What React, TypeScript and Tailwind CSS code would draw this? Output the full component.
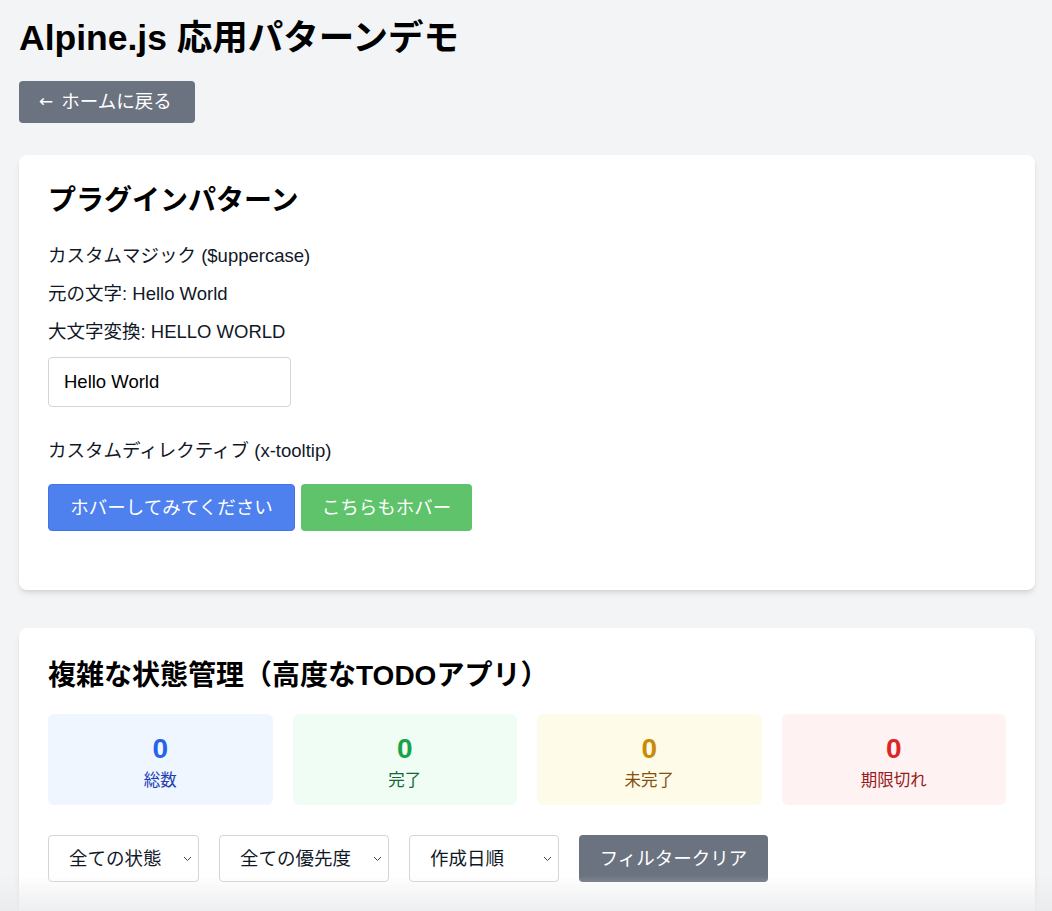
import React, { useState } from "react";

const font = { fontFamily: '"Liberation Sans", "Noto Sans CJK JP", sans-serif' };

const stats = [
  { label: "総数", box: "bg-[#eff6ff]", num: "text-[#2563eb]", text: "text-[#1e40af]" },
  { label: "完了", box: "bg-[#f0fdf4]", num: "text-[#16a34a]", text: "text-[#166534]" },
  { label: "未完了", box: "bg-[#fefce8]", num: "text-[#ca8a04]", text: "text-[#854d0e]" },
  { label: "期限切れ", box: "bg-[#fef2f2]", num: "text-[#dc2626]", text: "text-[#991b1b]" },
];

const Select = ({ label, width }: { label: string; width: string }) => (
  <div
    className={`flex items-center justify-between h-[47px] ${width} pl-[20px] pr-[6px] bg-white border border-gray-300 rounded-[4px] text-[18.5px] text-gray-900`}
  >
    <span>{label}</span>
    <svg width="9" height="6" viewBox="0 0 9 6" fill="none" stroke="#444" strokeWidth="1">
      <path d="M1 1l3.5 3.5L8 1" />
    </svg>
  </div>
);

export default function App() {
  const [text, setText] = useState("Hello World");
  return (
    <div className="min-h-screen bg-[#f3f4f6] text-[#111827]" style={font}>
      <div className="pl-[19px] pr-[17px] pt-[17px] pb-10">
        <h1 className="text-[35.5px] leading-[42px] font-bold text-black">Alpine.js 応用パターンデモ</h1>
        <button className="mt-[22px] h-[42px] pl-[20px] pr-[23px] bg-[#6b7280] text-white text-[18.5px] rounded-[4px] flex items-center">
          <span className="mr-[8px] text-[17px]" style={{ fontFamily: '"DejaVu Sans", sans-serif' }}>
            ←
          </span>
          ホームに戻る
        </button>

        <div className="mt-[32px] bg-white rounded-[8px] shadow-md px-[29px] pt-[28px] pb-[59px]">
          <h2 className="text-[28px] leading-[36px] font-bold text-black">プラグインパターン</h2>
          <p className="mt-[23px] text-[18.5px] leading-[28px]">カスタムマジック ($uppercase)</p>
          <p className="mt-[10px] text-[18.5px] leading-[28px]">元の文字: {text}</p>
          <p className="mt-[10px] text-[18.5px] leading-[28px]">大文字変換: {text.toUpperCase()}</p>
          <input
            value={text}
            onChange={(e) => setText(e.target.value)}
            className="mt-[11px] block w-[243px] h-[50px] px-[15px] border border-gray-300 rounded-[4px] text-[18.5px] text-black outline-none"
          />
          <p className="mt-[30px] text-[18.5px] leading-[28px]">カスタムディレクティブ (x-tooltip)</p>
          <div className="mt-[19px] flex gap-[6px]">
            <button className="h-[47px] w-[247px] bg-[#4e80ee] border border-[#3f74ea] text-white text-[18.5px] rounded-[4px]">
              ホバーしてみてください
            </button>
            <button className="h-[47px] w-[171px] bg-[#5ec36a] text-white text-[18.5px] rounded-[4px]">
              こちらもホバー
            </button>
          </div>
        </div>

        <div className="mt-[38px] bg-white rounded-[8px] shadow-md px-[29px] pt-[30px] pb-[40px]">
          <h2 className="text-[28px] leading-[36px] font-bold text-black">複雑な状態管理（高度なTODOアプリ）</h2>
          <div className="mt-[20px] grid grid-cols-4 gap-[20px]">
            {stats.map((s) => (
              <div key={s.label} className={`${s.box} rounded-[6px] h-[91px] pt-[5px] flex flex-col items-center justify-center`}>
                <div className={`${s.num} text-[28px] leading-[32px] font-bold`}>0</div>
                <div className={`${s.text} text-[16.5px] leading-[24px] mt-[3px]`}>{s.label}</div>
              </div>
            ))}
          </div>
          <div className="mt-[30px] flex items-center gap-[20px]">
            <Select label="全ての状態" width="w-[151px]" />
            <Select label="全ての優先度" width="w-[170px]" />
            <Select label="作成日順" width="w-[150px]" />
            <button className="h-[47px] w-[189px] bg-[#6b7280] text-white text-[18.5px] rounded-[4px]">
              フィルタークリア
            </button>
          </div>
          <div className="h-[200px]" />
        </div>
      </div>
      <div className="fixed bottom-0 left-0 right-0 h-[36px] bg-gradient-to-b from-transparent to-[#e9eaec]/80 pointer-events-none" />
    </div>
  );
}
